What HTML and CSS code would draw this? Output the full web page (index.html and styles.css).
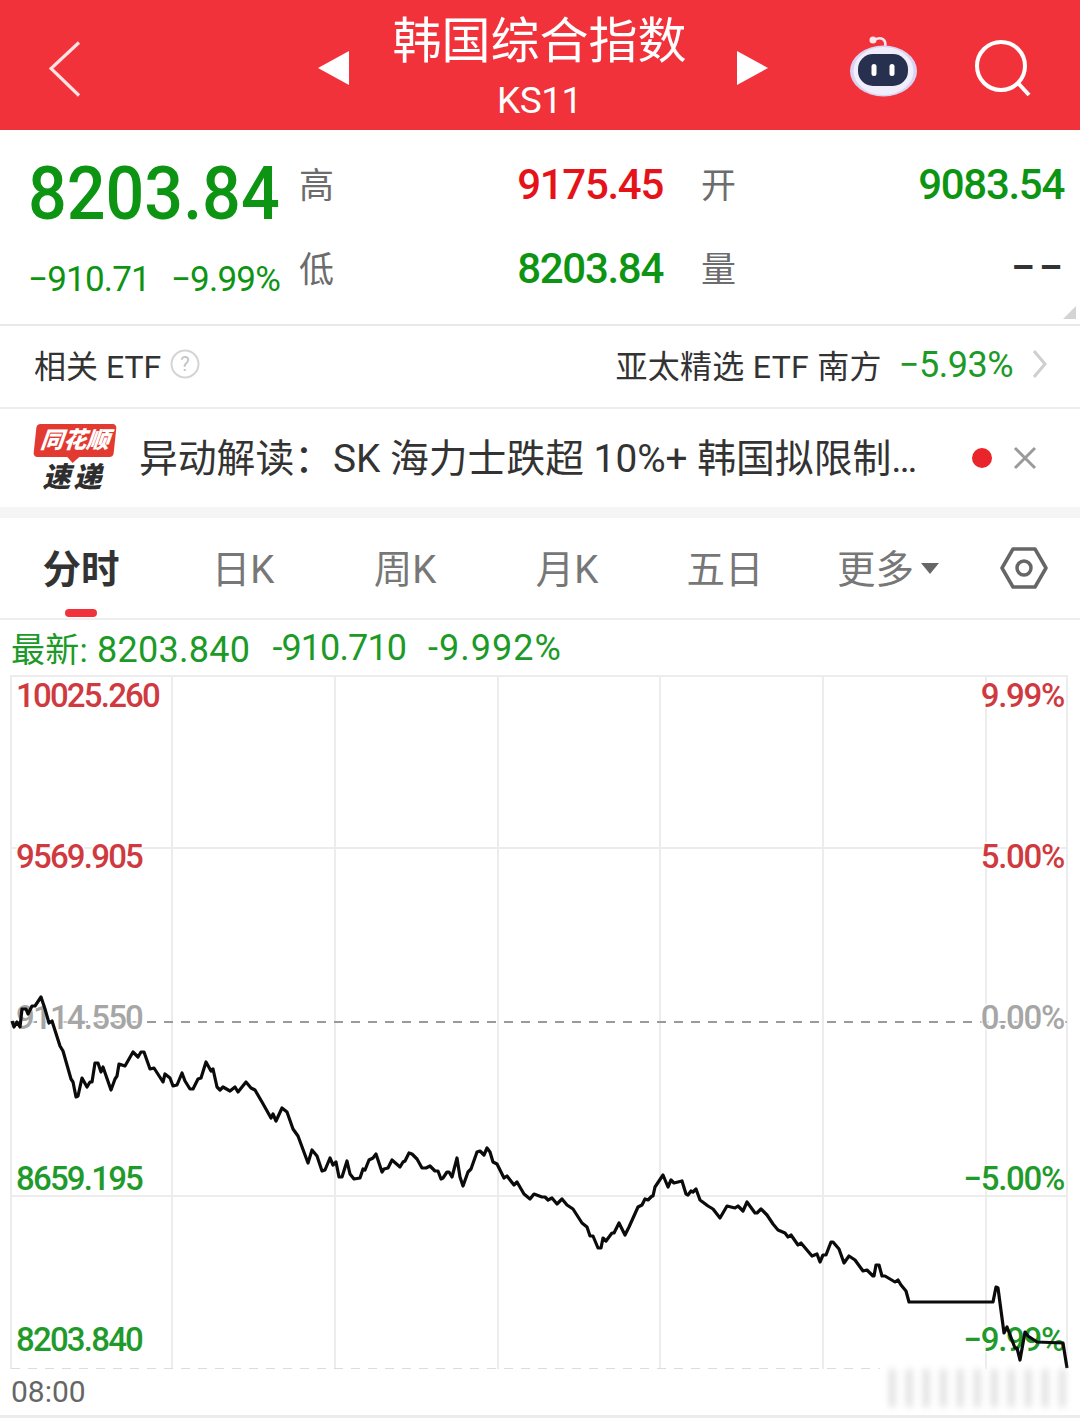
FILE: index.html
```html
<!DOCTYPE html>
<html lang="zh-CN">
<head>
    <meta charset="UTF-8">
    <meta name="viewport" content="width=device-width, initial-scale=1.0">
    <title>韩国综合指数</title>
    <link rel="stylesheet" href="styles.css">
</head>
<body>
    <header class="topbar">
        <div class="topbar-left">
            <svg class="back-icon" width="32" height="56" viewBox="0 0 32 56"><path d="M30 1.500 L2 27.500 L30 54.500" fill="none" stroke="#fde3e3" stroke-width="3.200"/></svg>
        </div>
        <div class="topbar-title">
            <span class="tri tri-left"></span>
            <div class="title-text">
                <div class="title-name">韩国综合指数</div>
                <div class="title-code">KS11</div>
            </div>
            <span class="tri tri-right"></span>
        </div>
        <div class="topbar-right">
            <svg class="robot-icon" width="70" height="64" viewBox="0 0 70 64">
                <path d="M25 4 C32 0 38 3 36 12" fill="none" stroke="#f3e6f2" stroke-width="2.500"/>
                <circle cx="24" cy="4" r="3.500" fill="#fbe6ea"/>
                <ellipse cx="34.500" cy="35" rx="33.500" ry="25.500" fill="#d9d3f3"/>
                <ellipse cx="34.500" cy="35" rx="30" ry="24" fill="#f1eefb"/>
                <rect x="9" y="18" width="50" height="32" rx="15" fill="#27304f"/>
                <rect x="22.500" y="28" width="5" height="12" rx="2.500" fill="#fff"/>
                <rect x="40.500" y="28" width="5" height="12" rx="2.500" fill="#fff"/>
            </svg>
            <svg class="search-icon" width="58" height="58" viewBox="0 0 58 58"><circle cx="27" cy="26" r="24" fill="none" stroke="#fff" stroke-width="4"/><path d="M44 43 L55 55" stroke="#fff" stroke-width="4"/></svg>
        </div>
    </header>

    <section class="quote">
        <div class="quote-main">
            <div class="price">8203.84</div>
            <div class="change"><span>−910.71</span><span>−9.99%</span></div>
        </div>
        <div class="quote-grid">
            <span class="q-label">高</span><span class="q-value up">9175.45</span><span class="q-label q-label-far">开</span><span class="q-value down">9083.54</span>
            <span class="q-label">低</span><span class="q-value down">8203.84</span><span class="q-label q-label-far">量</span><span class="q-value empty">––</span>
        </div>
        <span class="corner"></span>
    </section>

    <section class="etf">
        <div class="etf-left">
            <span>相关 ETF</span>
            <svg width="30" height="30" viewBox="0 0 30 30"><circle cx="15" cy="15" r="13.500" fill="none" stroke="#d4d4d4" stroke-width="2"/><text x="15" y="22" text-anchor="middle" class="help-mark">?</text></svg>
        </div>
        <div class="etf-right">
            <span class="etf-name">亚太精选 ETF 南方</span>
            <span class="etf-pct">−5.93%</span>
            <svg width="16" height="28" viewBox="0 0 16 28"><path d="M2 1 L13 14 L2 27" fill="none" stroke="#cfcfcf" stroke-width="3"/></svg>
        </div>
    </section>

    <section class="news">
        <div class="logo">
            <div class="logo-badge">同花顺</div>
            <div class="logo-sub">速递</div>
        </div>
        <div class="news-text">异动解读：SK 海力士跌超 10%+ 韩国拟限制…</div>
        <span class="news-dot"></span>
        <svg class="news-close" width="24" height="24" viewBox="0 0 24 24"><path d="M2 2 L22 22 M22 2 L2 22" stroke="#9a9a9a" stroke-width="3"/></svg>
    </section>

    <nav class="tabs">
        <div class="tab active">分时<span class="tab-bar"></span></div>
        <div class="tab">日K</div>
        <div class="tab">周K</div>
        <div class="tab">月K</div>
        <div class="tab">五日</div>
        <div class="tab">更多<span class="caret"></span></div>
        <div class="tab">
            <svg class="hex-icon" width="48" height="42" viewBox="0 0 48 42"><path d="M13 2 H35 L46 21 L35 40 H13 L2 21 Z" fill="none" stroke="#666" stroke-width="3.500" stroke-linejoin="round"/><circle cx="24" cy="21" r="7" fill="none" stroke="#666" stroke-width="3.500"/></svg>
        </div>
    </nav>

    <div class="latest">
        <span class="latest-now"><span class="latest-tag">最新: </span>8203.840</span><span class="latest-drop">-910.710</span><span class="latest-pct">-9.992%</span>
    </div>

    <section class="chart">
        <svg class="chart-svg" width="1080" height="694" viewBox="0 676 1080 694">
            <g stroke="#ececec" stroke-width="2">
                <path d="M11 676 V1370 M172 676 V1370 M335 676 V1370 M498 676 V1370 M660 676 V1370 M823 676 V1370 M986 676 V1370 M1067 676 V1370"/>
                <path d="M11 677 H1067 M11 849 H1067 M11 1197 H1067"/>
            </g>
            <path d="M11 1023 H1067" stroke="#9a9a9a" stroke-width="2" stroke-dasharray="9 8"/>
            <path d="M11 1370 H880" stroke="#e2dcd0" stroke-width="2" stroke-dasharray="9 8"/>
        </svg>
        <div class="chart-labels">
            <span class="lbl up-soft">10025.260</span><span class="lbl up-soft">9.99%</span>
            <span class="lbl up-soft">9569.905</span><span class="lbl up-soft">5.00%</span>
            <span class="lbl flat">9114.550</span><span class="lbl flat">0.00%</span>
            <span class="lbl down-soft">8659.195</span><span class="lbl down-soft">−5.00%</span>
            <span class="lbl down-soft">8203.840</span><span class="lbl down-soft">−9.99%</span>
        </div>
        <svg class="chart-svg" width="1080" height="694" viewBox="0 676 1080 694">
            <polyline class="price-line" points="12,1022 14,1028 17,1023 20,1028 22,1010 26,1010 28,1015 32,1007 35,1007 41,998 45,1010 49,1024 52,1022 60,1047 63,1052 71,1080 73,1083 76,1098 78,1097 82,1079 87,1088 90,1083 92,1083 95,1064 98,1064 101,1073 103,1068 111,1091 115,1080 117,1077 119,1065 125,1067 133,1053 138,1058 141,1053 144,1053 150,1070 154,1069 163,1083 165,1075 170,1079 173,1087 177,1086 182,1074 185,1082 190,1090 193,1090 198,1080 201,1079 206,1063 211,1072 213,1070 217,1088 220,1091 223,1088 230,1092 235,1088 238,1093 246,1083 251,1089 255,1091 262,1103 271,1119 273,1115 276,1122 282,1109 287,1113 293,1130 298,1137 308,1164 312,1151 317,1157 322,1172 325,1171 330,1159 333,1166 336,1163 339,1178 342,1178 347,1162 350,1175 354,1180 360,1179 363,1170 365,1171 369,1161 373,1159 376,1155 382,1173 384,1170 388,1169 392,1161 400,1168 403,1163 405,1162 409,1154 412,1155 417,1160 422,1169 426,1169 430,1167 435,1172 438,1172 441,1180 443,1179 447,1173 449,1173 452,1178 457,1159 460,1178 463,1187 468,1173 471,1170 477,1153 480,1152 484,1156 487,1149 490,1153 493,1163 497,1165 504,1179 507,1177 514,1186 517,1183 524,1195 530,1200 534,1195 542,1198 545,1198 548,1201 552,1199 557,1205 562,1200 567,1206 573,1210 582,1224 587,1228 590,1237 593,1237 598,1249 601,1249 603,1239 606,1242 612,1234 614,1234 619,1224 625,1236 629,1228 638,1208 642,1206 645,1200 648,1201 652,1197 653,1197 655,1188 663,1176 668,1188 671,1181 674,1184 682,1182 686,1195 688,1196 691,1192 693,1193 696,1190 700,1201 708,1207 713,1210 720,1219 727,1207 735,1209 738,1207 743,1212 747,1203 755,1214 757,1214 761,1210 767,1216 773,1225 778,1231 785,1234 788,1238 791,1236 798,1246 801,1244 812,1257 817,1255 820,1263 823,1256 826,1256 831,1243 833,1243 839,1250 844,1264 849,1257 855,1261 863,1272 867,1271 873,1277 874,1277 876,1266 879,1266 882,1277 885,1277 895,1283 898,1281 901,1286 906,1292 909,1303 993,1303 996,1288 998,1289 1004,1334 1007,1328 1015,1349 1017,1349 1020,1361 1025,1333 1028,1337 1037,1343 1063,1344 1067,1369"/>
        </svg>
    </section>

    <footer class="axis">
        <span>08:00</span>
        <div class="mosaic"></div>
    </footer>
</body>
</html>
```

FILE: styles.css
```css
body {
    font-family: Roboto, "Noto Sans CJK SC", sans-serif;
    margin: 0;
    padding: 0;
    background: #fff;
    color: #333;
}
svg {
    display: block;
}

/* red title bar */
.topbar {
    height: 130px;
    background: #f2323a;
    display: grid;
    grid-template-columns: 1fr auto 1fr;
    align-items: center;
    color: #fff;
}
.topbar-left {
    padding-left: 49px;
    padding-top: 8px;
}
.topbar-title {
    display: flex;
    align-items: center;
    gap: 44px;
    margin-left: 5px;
}
.title-text {
    box-sizing: border-box;
    text-align: center;
    width: 300px;
    padding-right: 6px;
}
.title-name {
    font-size: 49px;
    line-height: 62px;
    margin-top: 6px;
}
.title-code {
    font-size: 37px;
    line-height: 50px;
    letter-spacing: -0.5px;
    margin-top: 3px;
}
.tri {
    width: 0;
    height: 0;
    margin-top: 6px;
    border-top: 17px solid transparent;
    border-bottom: 17px solid transparent;
}
.tri-left {
    border-right: 31px solid #fff;
}
.tri-right {
    border-left: 31px solid #fff;
}
.topbar-right {
    display: flex;
    justify-content: flex-end;
    align-items: center;
    gap: 54px;
    padding-right: 48px;
}
.robot-icon {
    margin-top: 6px;
    margin-right: 1px;
}
.search-icon {
    margin-top: 8px;
}

/* quote block */
.quote {
    position: relative;
    height: 194px;
    display: flex;
    padding-left: 30px;
    border-bottom: 2px solid #e9e9e9;
}
.quote-main {
    width: 271px;
    color: #0e9413;
}
.price {
    font-size: 75px;
    font-weight: 500;
    line-height: 88px;
    margin: 19px 0 0 -2px;
    transform: scaleX(0.91);
    transform-origin: left;
}
.change {
    display: flex;
    justify-content: space-between;
    width: 252px;
    font-size: 35px;
    line-height: 44px;
    letter-spacing: -0.800px;
    margin: 21px 0 0 -2px;
}
.quote-grid {
    display: grid;
    grid-template-columns: 35px 327px 73px 328px;
    grid-auto-rows: 84px;
    align-items: center;
    padding-top: 12px;
}
.q-label {
    font-size: 35px;
    color: #6c6c6c;
    white-space: nowrap;
    margin: -4px 0 0 -2px;
}
.q-label-far {
    margin-left: 38px;
}
.q-value {
    font-size: 42px;
    font-weight: 500;
    text-align: right;
    letter-spacing: -1.300px;
}
.up {
    color: #e5121a;
}
.down {
    color: #0e9413;
}
.q-value.empty {
    color: #333;
    letter-spacing: 5px;
    font-size: 36px;
    font-weight: 700;
    margin-right: -3px;
}
.corner {
    position: absolute;
    right: 4px;
    bottom: 5px;
    width: 0;
    height: 0;
    border-left: 13px solid transparent;
    border-bottom: 13px solid #d4d4d4;
}

/* related ETF */
.etf {
    height: 75px;
    display: flex;
    justify-content: space-between;
    align-items: center;
    padding: 0 32px 6px 34px;
    border-bottom: 2px solid #ededed;
    font-size: 32px;
}
.etf-left,
.etf-right {
    display: flex;
    align-items: center;
}
.etf-left {
    gap: 9px;
}
.etf-name {
    margin-right: 17px;
    letter-spacing: 0.300px;
}
.etf-pct {
    color: #1c9a27;
    font-size: 36px;
    margin: 3px 19px 0 0;
    letter-spacing: -0.500px;
}
.help-mark {
    font-size: 20px;
    fill: #c4c4c4;
}

/* news strip */
.news {
    height: 98px;
    display: flex;
    align-items: center;
    padding-left: 35px;
    border-bottom: 11px solid #f5f5f5;
}
.logo {
    width: 80px;
    margin-right: 25px;
    text-align: center;
    font-style: italic;
    font-weight: 900;
}
.logo-badge {
    position: relative;
    background: #e23a30;
    color: #fff;
    font-size: 23px;
    line-height: 33px;
    border-radius: 4px;
    transform: skewX(-6deg);
    white-space: nowrap;
}
.logo-badge::after {
    content: "";
    position: absolute;
    left: 34px;
    bottom: -6px;
    border-left: 6px solid transparent;
    border-right: 6px solid transparent;
    border-top: 6px solid #e23a30;
}
.logo-sub {
    color: #2e2e2e;
    font-size: 28px;
    line-height: 36px;
    letter-spacing: 3px;
    margin: 3px 0 -3px -3px;
}
.news-text {
    width: 832px;
    font-size: 38.800px;
    line-height: 50px;
    margin: 2px 0 0 -1px;
    white-space: nowrap;
    color: #333;
}
.news-dot {
    width: 20px;
    height: 20px;
    border-radius: 50%;
    background: #e9242b;
    margin-left: 1px;
    margin-right: 21px;
}

/* period tabs */
.tabs {
    height: 100px;
    display: grid;
    grid-template-columns: 162px 162px 162px 162px 154px 172px 100px;
    align-items: center;
    border-bottom: 2px solid #eee;
}
.tab {
    position: relative;
    display: flex;
    justify-content: center;
    align-items: center;
    font-size: 38.500px;
    line-height: 54px;
    margin-top: 4px;
    color: #777;
}
.tab.active {
    color: #333;
    font-weight: 700;
}
.tab-bar {
    position: absolute;
    left: 65px;
    top: 66px;
    width: 32px;
    height: 8px;
    border-radius: 4px;
    background: #f2323a;
}
.caret {
    width: 0;
    height: 0;
    margin-left: 7px;
    margin-top: -4px;
    border-left: 9px solid transparent;
    border-right: 9px solid transparent;
    border-top: 11px solid #666;
}
.hex-icon {
    margin-top: -4px;
}

/* latest values */
.latest {
    height: 55px;
    display: flex;
    align-items: center;
    padding-left: 11px;
    font-size: 36px;
    color: #1c9a27;
}
.latest-tag {
    font-size: 34px;
}
.latest-now {
    letter-spacing: 0.300px;
}
.latest-drop {
    margin-left: 22px;
    letter-spacing: -0.900px;
}
.latest-pct {
    margin-left: 22px;
    letter-spacing: 1px;
}

/* chart */
.chart {
    position: relative;
    height: 694px;
}
.chart-svg {
    position: absolute;
    left: 0;
    top: 0;
}
.price-line {
    fill: none;
    stroke: #0b0b0b;
    stroke-width: 3.200;
    stroke-linejoin: round;
}
.chart-labels {
    position: absolute;
    left: 16px;
    right: 16px;
    top: 1px;
    display: grid;
    grid-template-columns: auto auto;
    justify-content: space-between;
    grid-auto-rows: 161px;
    font-size: 33px;
    font-weight: 500;
    line-height: 40px;
    letter-spacing: -1.800px;
}
.lbl {
    text-shadow: 0 0 3px #fff, 0 0 3px #fff, 0 0 4px #fff, 0 0 4px #fff;
}
.lbl:nth-child(even) {
    text-align: right;
    letter-spacing: -1.300px;
}
.up-soft {
    color: #cf3a40;
}
.flat {
    color: #a6a6a6;
}
.down-soft {
    color: #1f9a2b;
}

/* time axis */
.axis {
    position: relative;
    height: 46px;
    border-bottom: 3px solid #ececec;
    padding-left: 11px;
    font-size: 30px;
    line-height: 46px;
    color: #666;
}
.mosaic {
    position: absolute;
    left: 880px;
    top: 0;
    width: 186px;
    height: 38px;
    background: repeating-linear-gradient(90deg, #fff 0, #fff 8px, #d2d2d2 11px, #dcdcdc 14px, #fff 17px);
    filter: blur(3px);
    opacity: 0.8;
}
```
